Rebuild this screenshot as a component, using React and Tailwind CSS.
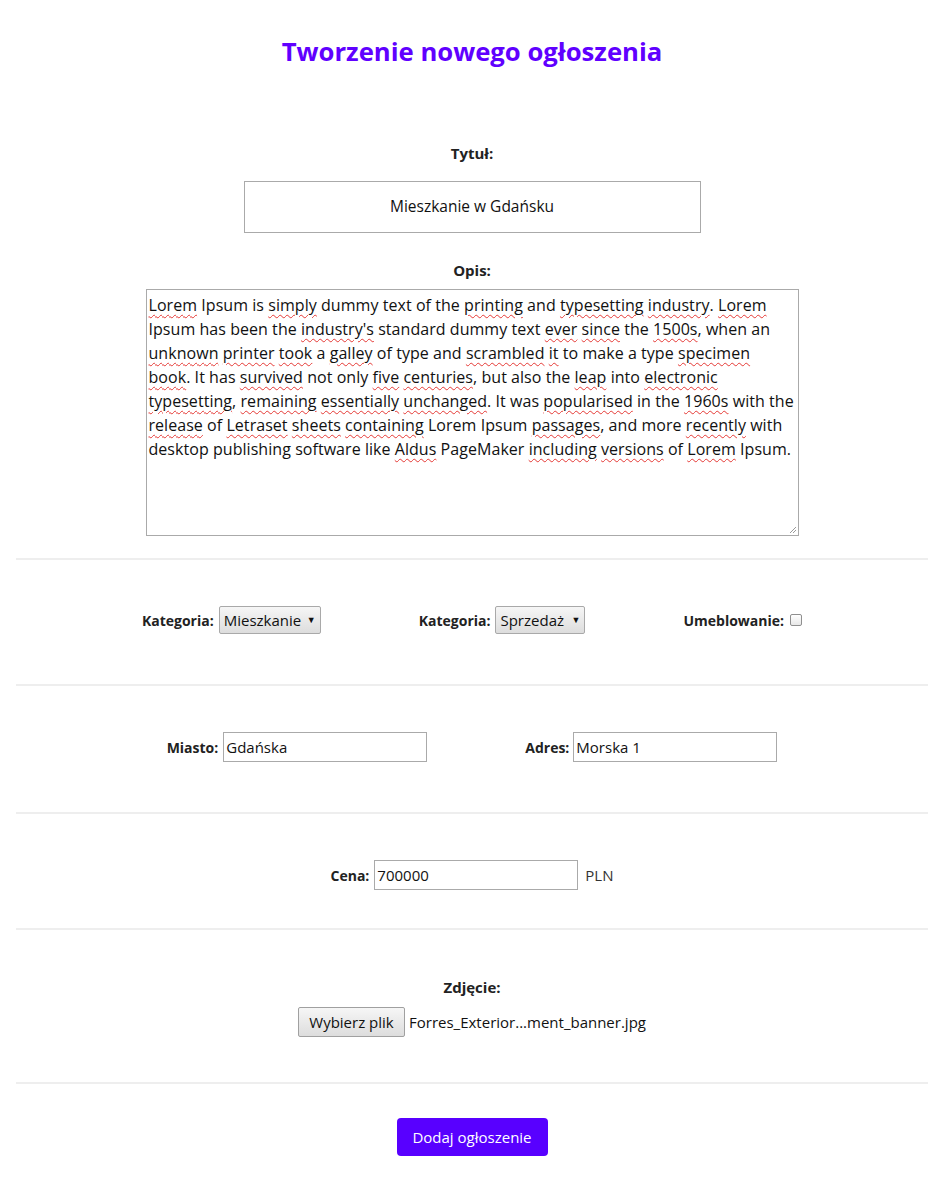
import React from "react";

const font = { fontFamily: '"Open Sans", "Noto Sans", sans-serif' };

function W({ children }) {
    return (
        <span className="underline decoration-wavy decoration-[#e53935] decoration-1 underline-offset-[3px]">
            {children}
        </span>
    );
}

const lines = [
    <>
        <W>Lorem</W> Ipsum is <W>simply</W> dummy text of the <W>printing</W> and <W>typesetting</W>{" "}
        <W>industry</W>. <W>Lorem</W>
    </>,
    <>
        Ipsum has been the <W>industry's</W> standard dummy text <W>ever</W> <W>since</W> the <W>1500s</W>,
        when an
    </>,
    <>
        <W>unknown</W> <W>printer</W> <W>took</W> a <W>galley</W> of type and <W>scrambled</W> <W>it</W> to
        make a type <W>specimen</W>
    </>,
    <>
        <W>book</W>. It has <W>survived</W> not only <W>five</W> <W>centuries</W>, but also the <W>leap</W>{" "}
        into <W>electronic</W>
    </>,
    <>
        <W>typesetting</W>, <W>remaining</W> <W>essentially</W> <W>unchanged</W>. It was{" "}
        <W>popularised</W> in the <W>1960s</W> with the
    </>,
    <>
        <W>release</W> of <W>Letraset</W> <W>sheets</W> <W>containing</W> Lorem Ipsum <W>passages</W>, and
        more <W>recently</W> with
    </>,
    <>
        desktop publishing software like <W>Aldus</W> PageMaker <W>including</W> <W>versions</W> of{" "}
        <W>Lorem</W> Ipsum.
    </>,
];

function Rule() {
    return <div className="h-[2px] bg-[#eeeeee] mx-4" />;
}

function FakeSelect({ value, width }) {
    return (
        <span
            className={`inline-flex items-center justify-between h-[28px] px-[4px] border border-[#a9a9a9] rounded-[2px] bg-gradient-to-b from-[#f6f6f6] to-[#dddddd] text-[15px] text-[#111] ${width}`}
        >
            <span>{value}</span>
            <span className="text-[9px] ml-1">▼</span>
        </span>
    );
}

function TextInput({ value }) {
    return (
        <span className="inline-flex items-center w-[204px] h-[30px] border border-[#aaaaaa] px-[2px] text-[15px] text-[#111] bg-white">
            {value}
        </span>
    );
}

export default function App() {
    return (
        <div className="bg-white text-[#222] min-h-[1194px]" style={font}>
            <h1 className="pt-[30px] text-center text-[25.7px] leading-[44px] font-bold text-[#6000ff]">
                Tworzenie nowego ogłoszenia
            </h1>

            <div className="mt-[69px] text-center text-[15px] leading-[20px] font-bold">Tytuł:</div>
            <div className="mt-[18px] mx-auto w-[457px] h-[52px] border border-[#aaaaaa] flex items-center justify-center text-[15.5px] text-[#111]">
                Mieszkanie w Gdańsku
            </div>

            <div className="mt-[27px] text-center text-[15px] leading-[20px] font-bold">Opis:</div>
            <div className="relative mt-[9px] mx-auto w-[653px] h-[247px] border border-[#aaaaaa] pl-[2px] pt-[3px] text-[16px] leading-[24px] text-[#111] tracking-[0.05px]">
                {lines.map((l, i) => (
                    <div key={i} className="whitespace-nowrap">
                        {l}
                    </div>
                ))}
                <svg className="absolute right-[1px] bottom-[1px]" width="9" height="9" viewBox="0 0 9 9">
                    <path d="M8 2 L2 8 M8 5 L5 8" stroke="#9a9a9a" strokeWidth="1" />
                </svg>
            </div>

            <div className="mt-[22px]">
                <Rule />
            </div>

            <div className="pt-[46px] pb-[50px] flex justify-center items-center gap-[98px] text-[15px]">
                <div className="flex items-center gap-[5px]">
                    <span className="font-bold text-[14px]">Kategoria:</span>
                    <FakeSelect value="Mieszkanie" width="w-[102px]" />
                </div>
                <div className="flex items-center gap-[5px]">
                    <span className="font-bold text-[14px]">Kategoria:</span>
                    <FakeSelect value="Sprzedaż" width="w-[90px]" />
                </div>
                <div className="flex items-center gap-[6px]">
                    <span className="font-bold text-[14px]">Umeblowanie:</span>
                    <span className="w-[12px] h-[12px] border border-[#8f8f8f] rounded-[2px] bg-gradient-to-b from-white to-[#e8e8e8]" />
                </div>
            </div>

            <Rule />

            <div className="pt-[46px] pb-[50px] flex justify-center items-center gap-[98px] text-[15px]">
                <div className="flex items-center gap-[5px]">
                    <span className="font-bold text-[14px]">Miasto:</span>
                    <TextInput value="Gdańska" />
                </div>
                <div className="flex items-center gap-[4px]">
                    <span className="font-bold text-[14px]">Adres:</span>
                    <TextInput value="Morska 1" />
                </div>
            </div>

            <Rule />

            <div className="pt-[46px] pb-[38px] flex justify-center items-center text-[15px]">
                <span className="font-bold text-[14px] mr-[5px]">Cena:</span>
                <TextInput value="700000" />
                <span className="ml-[7px] text-[#333]">PLN</span>
            </div>

            <Rule />

            <div className="pt-[47px] pb-[45px] text-[15px]">
                <div className="text-center leading-[20px] font-bold">Zdjęcie:</div>
                <div className="mt-[10px] flex justify-center items-center">
                    <span className="inline-flex items-center justify-center w-[107px] h-[30px] border border-[#a0a0a0] rounded-[2px] bg-gradient-to-b from-[#f6f6f6] to-[#dddddd] text-[#111]">
                        Wybierz plik
                    </span>
                    <span className="ml-[4px] text-[#111]">Forres_Exterior...ment_banner.jpg</span>
                </div>
            </div>

            <Rule />

            <div className="mt-[34px] flex justify-center">
                <span className="inline-flex items-center justify-center w-[151px] h-[38px] rounded-[4px] bg-[#5800ff] text-white text-[15px]">
                    Dodaj ogłoszenie
                </span>
            </div>
        </div>
    );
}
